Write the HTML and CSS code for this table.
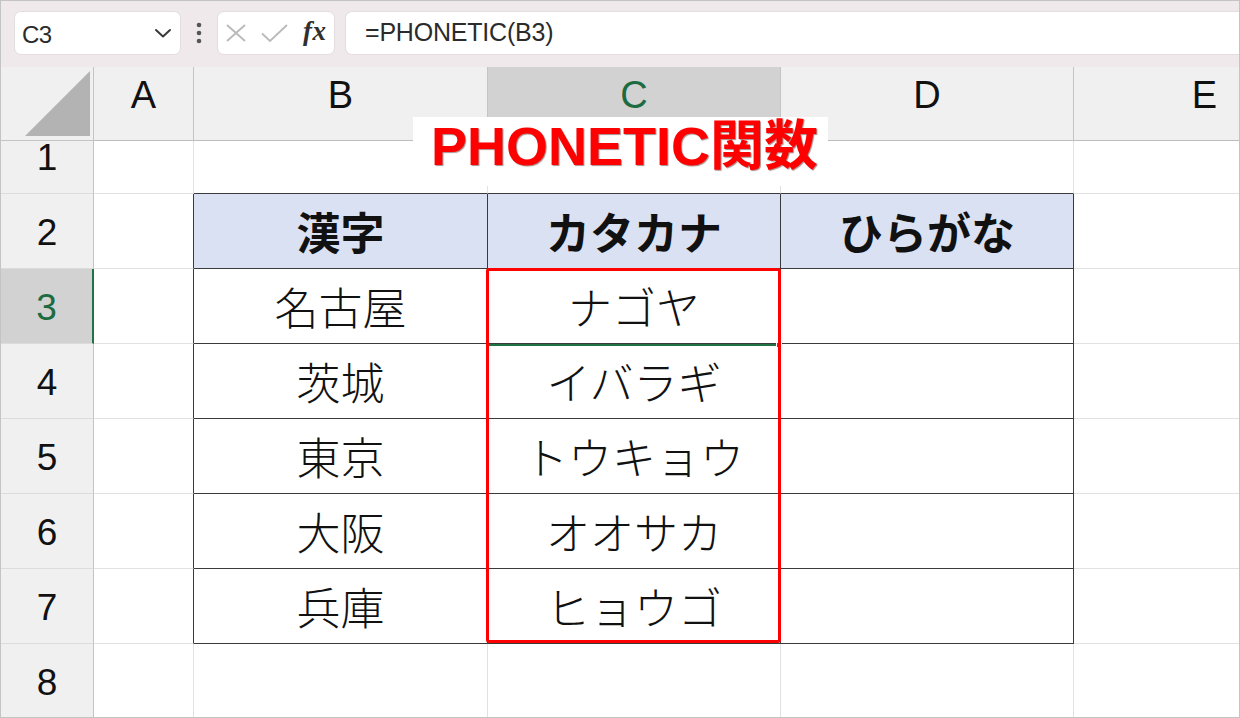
FILE: index.html
```html
<!DOCTYPE html>
<html lang="ja">
<head>
<meta charset="utf-8">
<title>PHONETIC関数</title>
<link rel="stylesheet" href="styles.css">
</head>
<body>
<div class="app">
  <div class="toolbar">
    <div class="namebox">
      <span class="nb-text">C3</span>
      <svg class="chev" width="18" height="10" viewBox="0 0 18 10"><polyline points="2,2 9,8.5 16,2" fill="none" stroke="#3a3a3a" stroke-width="2" stroke-linecap="round" stroke-linejoin="round"/></svg>
    </div>
    <div class="dots">
      <svg width="6" height="22" viewBox="0 0 6 22"><circle cx="3" cy="3" r="2.3" fill="#555"/><circle cx="3" cy="11" r="2.3" fill="#555"/><circle cx="3" cy="19" r="2.3" fill="#555"/></svg>
    </div>
    <div class="btns">
      <svg class="ic-x" width="20" height="18" viewBox="0 0 20 18"><path d="M1 1 L19 17 M19 1 L1 17" stroke="#b9b9b9" stroke-width="1.8" fill="none"/></svg>
      <svg class="ic-check" width="27" height="18" viewBox="0 0 27 18"><path d="M1 9.5 L9 17 L26 1" stroke="#b9b9b9" stroke-width="1.8" fill="none"/></svg>
      <span class="fx">fx</span>
    </div>
    <div class="formula">=PHONETIC(B3)</div>
  </div>

  <div class="sheet">
    <div class="corner"><svg width="66" height="66" viewBox="0 0 66 66"><polygon points="66,0 66,65 1,65" fill="#b3b3b3"/></svg></div>
    <div class="ch">A</div>
    <div class="ch">B</div>
    <div class="ch sel">C</div>
    <div class="ch">D</div>
    <div class="ch">E</div>

    <div class="rh r1">1</div>
    <div class="c"></div>
    <div class="c tt"></div>
    <div class="c tt"></div>
    <div class="c tt"></div>
    <div class="c"></div>

    <div class="rh">2</div>
    <div class="c tl"></div>
    <div class="c tb th">漢字</div>
    <div class="c tb th">カタカナ</div>
    <div class="c tb th">ひらがな</div>
    <div class="c"></div>

    <div class="rh sel">3</div>
    <div class="c tl"></div>
    <div class="c tb">名古屋</div>
    <div class="c tb">ナゴヤ</div>
    <div class="c tb"></div>
    <div class="c"></div>

    <div class="rh">4</div>
    <div class="c tl"></div>
    <div class="c tb">茨城</div>
    <div class="c tb">イバラギ</div>
    <div class="c tb"></div>
    <div class="c"></div>

    <div class="rh">5</div>
    <div class="c tl"></div>
    <div class="c tb">東京</div>
    <div class="c tb">トウキョウ</div>
    <div class="c tb"></div>
    <div class="c"></div>

    <div class="rh">6</div>
    <div class="c tl"></div>
    <div class="c tb">大阪</div>
    <div class="c tb">オオサカ</div>
    <div class="c tb"></div>
    <div class="c"></div>

    <div class="rh">7</div>
    <div class="c tl"></div>
    <div class="c tb">兵庫</div>
    <div class="c tb">ヒョウゴ</div>
    <div class="c tb"></div>
    <div class="c"></div>

    <div class="rh">8</div>
    <div class="c"></div>
    <div class="c"></div>
    <div class="c"></div>
    <div class="c"></div>
    <div class="c"></div>

    <div class="selection"></div>
    <div class="handle"></div>
    <div class="redbox"></div>
    <div class="title">PHONETIC関数</div>
  </div>
</div>
</body>
</html>
```

FILE: styles.css
```css
html, body {
  margin: 0;
  padding: 0;
  background: #ffffff;
}

.app {
  width: 1240px;
  height: 718px;
  box-sizing: border-box;
  border: 1px solid #c4c4c4;
  overflow: hidden;
  display: flex;
  flex-direction: column;
  font-family: "Liberation Sans", Arial, sans-serif;
}

/* formula bar */
.toolbar {
  height: 66px;
  flex: none;
  box-sizing: border-box;
  padding: 10px 0 0 13px;
  background: #efe9ec;
  display: flex;
  align-items: flex-start;
}

.namebox {
  width: 167px;
  height: 44px;
  box-sizing: border-box;
  background: #ffffff;
  border: 1px solid #e4dde0;
  border-radius: 7px;
  display: flex;
  align-items: center;
  justify-content: space-between;
  padding: 3px 8px 0 7px;
}

.nb-text {
  font-size: 24px;
  color: #2b2b2b;
  letter-spacing: -0.5px;
}

.chev {
  margin-top: -3px;
}

.dots {
  width: 36px;
  height: 44px;
  display: flex;
  align-items: center;
  justify-content: center;
}

.btns {
  width: 118px;
  height: 44px;
  box-sizing: border-box;
  background: #ffffff;
  border: 1px solid #e4dde0;
  border-radius: 7px;
  display: flex;
  align-items: center;
}

.ic-x {
  margin-left: 8px;
}

.ic-check {
  margin-left: 15px;
}

.fx {
  margin-left: 15px;
  font-family: "Liberation Serif", "Times New Roman", serif;
  font-style: italic;
  font-weight: bold;
  font-size: 27px;
  color: #303030;
  letter-spacing: 0.5px;
  margin-top: -3px;
}

.formula {
  flex: 1;
  height: 44px;
  margin-left: 10px;
  box-sizing: border-box;
  background: #ffffff;
  border: 1px solid #e4dde0;
  border-right: none;
  border-radius: 7px 0 0 7px;
  display: flex;
  align-items: center;
  padding: 0 0 2px 19px;
  font-size: 25px;
  color: #2b2b2b;
  letter-spacing: -0.2px;
}

/* sheet grid */
.sheet {
  position: relative;
  flex: 1;
  display: grid;
  grid-template-columns: 93px 100px 294px 293px 293px 262px;
  grid-template-rows: 74px 53px repeat(7, 75px);
  background: #ffffff;
}

.corner {
  background: #f0f0f0;
  border-right: 1px solid #c4c4c4;
  border-bottom: 1px solid #c4c4c4;
  box-sizing: border-box;
  display: flex;
  align-items: flex-end;
  justify-content: flex-end;
  padding: 0 3px 3px 0;
}

.ch {
  background: #f0f0f0;
  border-right: 1px solid #c4c4c4;
  border-bottom: 1px solid #bdbdbd;
  box-sizing: border-box;
  display: flex;
  justify-content: center;
  align-items: flex-start;
  padding-top: 9px;
  font-size: 38px;
  line-height: 1;
  color: #111111;
}

.ch.sel {
  background: #d2d2d2;
  color: #1d6b41;
  border-bottom: 2px solid #217346;
}

.rh {
  background: #f0f0f0;
  border-right: 1px solid #c4c4c4;
  border-bottom: 1px solid #dcdcdc;
  box-sizing: border-box;
  display: flex;
  justify-content: center;
  align-items: flex-end;
  padding-bottom: 17px;
  font-size: 37px;
  line-height: 1;
  color: #111111;
}

.rh.sel {
  background: #d2d2d2;
  color: #1d6b41;
  border-right: 2px solid #217346;
}

.c {
  border-right: 1px solid #e1e1e1;
  border-bottom: 1px solid #e1e1e1;
  box-sizing: border-box;
  display: flex;
  align-items: center;
  justify-content: center;
  font-family: "Noto Sans CJK JP", "Noto Sans CJK SC", sans-serif;
  font-size: 44px;
  font-weight: 300;
  line-height: 1;
  color: #111111;
}

.c.tt {
  border-bottom-color: #3a3a3a;
}

.c.tl {
  border-right-color: #3a3a3a;
}

.c.tb {
  border-right-color: #3a3a3a;
  border-bottom-color: #3a3a3a;
}

.c.th {
  background: #d9e1f2;
  font-weight: bold;
}

/* overlays */
.selection {
  position: absolute;
  left: 486px;
  top: 202px;
  width: 294px;
  height: 77px;
  box-sizing: border-box;
  border: 2px solid #217346;
}

.handle {
  position: absolute;
  left: 775px;
  top: 275px;
  width: 6px;
  height: 6px;
  background: #217346;
  border: 1px solid #ffffff;
  box-sizing: border-box;
}

.redbox {
  position: absolute;
  left: 485px;
  top: 201px;
  width: 295px;
  height: 375px;
  box-sizing: border-box;
  border: 3px solid #ff0000;
  border-radius: 3px;
}

.title {
  position: absolute;
  left: 412px;
  top: 50px;
  width: 415px;
  height: 69px;
  box-sizing: border-box;
  background: #ffffff;
  padding: 0 0 0 18px;
  font-family: "Liberation Sans", Arial, "Noto Sans CJK JP", sans-serif;
  font-weight: bold;
  font-size: 54px;
  line-height: 58px;
  color: #ff0000;
  text-shadow: 1px 1px 1px rgba(60, 0, 0, 0.45);
  white-space: nowrap;
}
```
